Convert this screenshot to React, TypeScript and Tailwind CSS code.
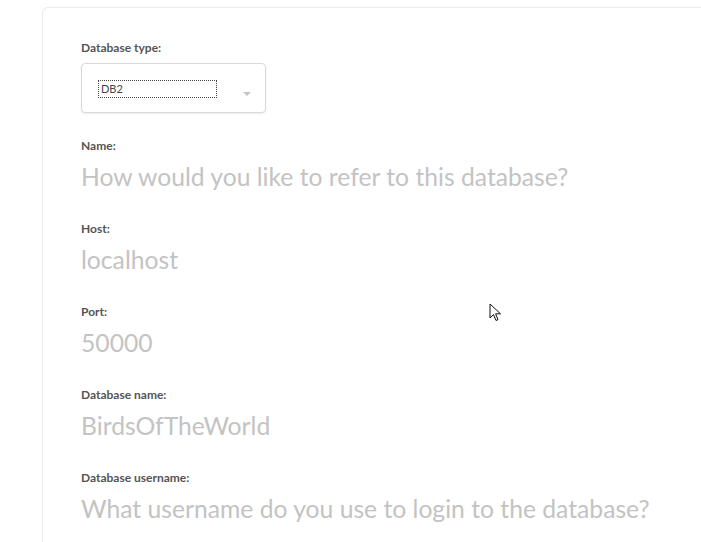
import React from 'react';

const fields = [
  { label: 'Name:', value: 'How would you like to refer to this database?' },
  { label: 'Host:', value: 'localhost' },
  { label: 'Port:', value: '50000' },
  { label: 'Database name:', value: 'BirdsOfTheWorld' },
  { label: 'Database username:', value: 'What username do you use to login to the database?' },
];

function Cursor() {
  return (
    <svg className="absolute left-[489px] top-[303px]" width="13" height="20" viewBox="0 0 13 20">
      <path
        d="M1 1 L1 15 L4.5 11.5 L7 17.5 L9 16.6 L6.6 10.8 L11.5 10.8 Z"
        fill="#fff"
        stroke="#111"
        strokeWidth="1"
        strokeLinejoin="miter"
      />
    </svg>
  );
}

export default function App() {
  return (
    <div
      className="relative h-[542px] w-[701px] overflow-hidden bg-white"
      style={{ fontFamily: 'Lato, "Open Sans", sans-serif' }}
    >
      <div className="ml-[42px] mt-[7px] h-[600px] rounded-tl-md border-l border-t border-[#ebebeb] pl-[38px] pt-[33px]">
        <div className="mb-[8px] text-[12px] font-bold leading-[14px] text-[#555]">Database type:</div>
        <div className="relative flex h-[50px] w-[185px] items-center rounded border border-[#d9d9d9] shadow-[0_1px_2px_rgba(0,0,0,0.08)]">
          <div className="ml-[16px] mt-[2px] flex h-[18px] w-[119px] items-center border border-dotted border-[#444] pl-[2px] text-[11px] text-[#444]">
            DB2
          </div>
          <div className="absolute right-[14px] top-[28px] h-0 w-0 border-x-[4px] border-t-[4px] border-x-transparent border-t-[#c4c4c4]" />
        </div>
        <div className="mt-[26px] flex flex-col">
          {fields.map((f) => (
            <div key={f.label} className="mb-[27px]">
              <div className="text-[12px] font-bold leading-[14px] text-[#555]">{f.label}</div>
              <div className="mt-[6px] text-[24.7px] leading-[36px] text-[#c3c3c3]">{f.value}</div>
            </div>
          ))}
        </div>
      </div>
      <Cursor />
    </div>
  );
}
